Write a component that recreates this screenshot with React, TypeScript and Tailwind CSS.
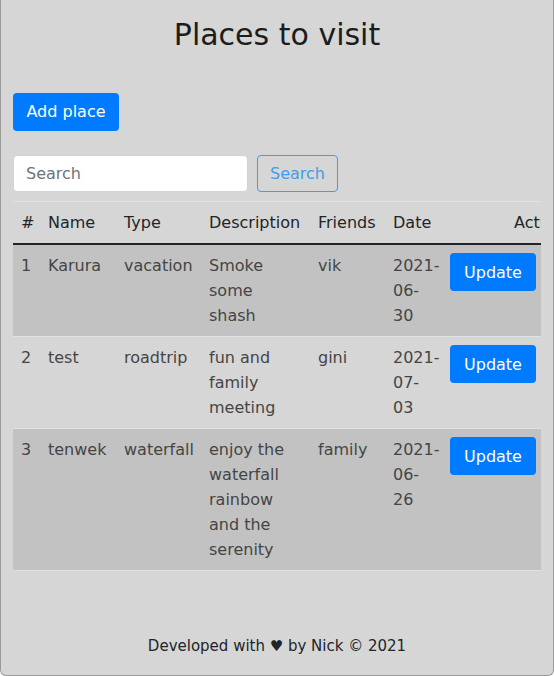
const places = [
  { id: 1, name: 'Karura', type: 'vacation', description: 'Smoke some shash', friends: 'vik', date: '2021-06-30' },
  { id: 2, name: 'test', type: 'roadtrip', description: 'fun and family meeting', friends: 'gini', date: '2021-07-03' },
  { id: 3, name: 'tenwek', type: 'waterfall', description: 'enjoy the waterfall rainbow and the serenity', friends: 'family', date: '2021-06-26' },
];

export default function App() {
  return (
    <div className="min-h-[676px] flex flex-col bg-[#d6d6d6] border-x border-b border-[#9a9a9a] rounded-b-md px-3 text-[#212529] font-['DejaVu_Sans',sans-serif]">
      {/* Header */}
      <h1 className="mt-4 text-center text-[30px] leading-[38px] text-[#1c1c1c] font-['Comic_Sans_MS','DejaVu_Sans',sans-serif] font-normal">
        Places to visit
      </h1>

      <div className="mt-[39px]">
        <button className="h-[38px] w-[106px] rounded bg-[#007bff] text-white text-base">Add place</button>
      </div>

      {/* Search */}
      <div className="mt-6 flex items-center gap-[9px]">
        <input
          placeholder="Search"
          className="w-[235px] h-[37px] px-3 rounded bg-white border border-[#ced4da] text-base placeholder:text-[#6c757d] outline-none"
        />
        <button className="h-[37px] w-[81px] rounded border border-[#3f9cf0] text-[#3f9cf0] text-base">Search</button>
      </div>

      {/* Places table */}
      <div className="mt-[9px] overflow-hidden">
        <table className="table-fixed w-[622px] border-collapse text-base leading-[25px]">
          <colgroup>
            <col className="w-[27px]" />
            <col className="w-[76px]" />
            <col className="w-[85px]" />
            <col className="w-[109px]" />
            <col className="w-[75px]" />
            <col className="w-[57px]" />
            <col className="w-[102px]" />
            <col className="w-[91px]" />
          </colgroup>
          <thead>
            <tr className="border-t border-[#dee2e6] border-b-2 border-b-[#212529] text-left">
              <th className="p-2 font-normal">#</th>
              <th className="p-2 font-normal">Name</th>
              <th className="p-2 font-normal">Type</th>
              <th className="p-2 font-normal">Description</th>
              <th className="p-2 font-normal">Friends</th>
              <th className="p-2 font-normal">Date</th>
              <th colSpan={2} className="py-2 pl-[72px] font-normal">Actions</th>
            </tr>
          </thead>
          <tbody className="text-[#454545]">
            {places.map((p, i) => (
              <tr key={p.id} className={`border-b border-[#dee2e6] align-top ${i % 2 === 0 ? 'bg-[#c2c2c2]' : ''}`}>
                <td className="p-2">{p.id}</td>
                <td className="p-2">{p.name}</td>
                <td className="p-2">{p.type}</td>
                <td className="p-2">{p.description}</td>
                <td className="p-2">{p.friends}</td>
                <td className="p-2">{p.date}</td>
                <td className="p-2">
                  <button className="w-[86px] h-[38px] rounded bg-[#007bff] text-white">Update</button>
                </td>
                <td className="p-2">
                  <button className="w-[75px] h-[38px] rounded bg-[#dc3545] text-white">Delete</button>
                </td>
              </tr>
            ))}
          </tbody>
        </table>
      </div>

      {/* Footer */}
      <footer className="mt-auto pb-[17px] text-center text-[15px] leading-6 text-[#212529]">
        Developed with ♥ by Nick © 2021
      </footer>
    </div>
  );
}
